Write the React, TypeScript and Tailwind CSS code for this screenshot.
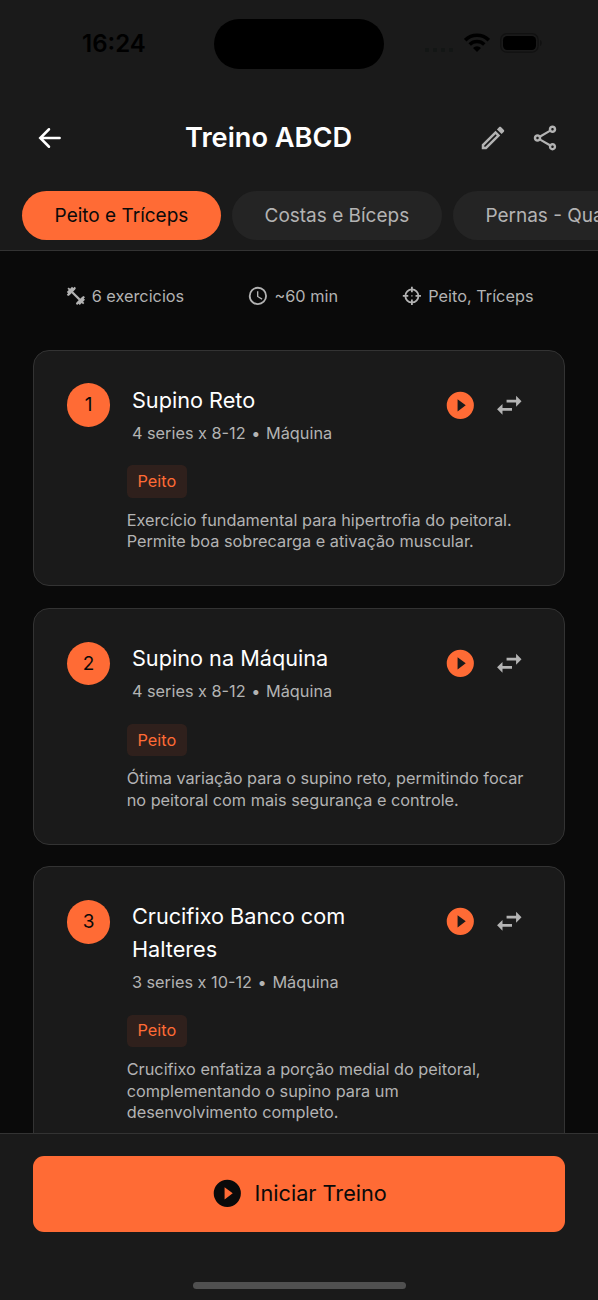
import type { ReactNode } from "react";

const tabs = ["Peito e Tríceps", "Costas e Bíceps", "Pernas - Quadríceps"];

const exercises = [
    {
        name: "Supino Reto",
        sets: "4 series x 8-12",
        equipment: "Máquina",
        muscle: "Peito",
        description: ["Exercício fundamental para hipertrofia do peitoral.", "Permite boa sobrecarga e ativação muscular."],
    },
    {
        name: "Supino na Máquina",
        sets: "4 series x 8-12",
        equipment: "Máquina",
        muscle: "Peito",
        description: ["Ótima variação para o supino reto, permitindo focar", "no peitoral com mais segurança e controle."],
    },
    {
        name: "Crucifixo Banco com Halteres",
        sets: "3 series x 10-12",
        equipment: "Máquina",
        muscle: "Peito",
        description: ["Crucifixo enfatiza a porção medial do peitoral,", "complementando o supino para um", "desenvolvimento completo."],
    },
];

const icons = {
    pencil: "M14.06 9L15 9.94 5.92 19H5v-.92L14.06 9m3.6-6c-.25 0-.51.1-.7.29l-1.83 1.83 3.75 3.75 1.83-1.83c.39-.39.39-1.04 0-1.41l-2.34-2.34c-.2-.2-.45-.29-.71-.29m-3.6 3.19L3 17.25V21h3.75L17.81 9.94l-3.75-3.75z",
    share: "M18 16.08c-.76 0-1.44.3-1.96.77L8.91 12.7c.05-.23.09-.46.09-.7s-.04-.47-.09-.7l7.05-4.11c.54.5 1.25.81 2.04.81 1.66 0 3-1.34 3-3s-1.34-3-3-3-3 1.34-3 3c0 .24.04.47.09.7L8.04 9.81C7.5 9.31 6.79 9 6 9c-1.66 0-3 1.34-3 3s1.34 3 3 3c.79 0 1.5-.31 2.04-.81l7.12 4.16c-.05.21-.08.43-.08.65 0 1.61 1.31 2.92 2.92 2.92s2.92-1.31 2.92-2.92-1.31-2.92-2.92-2.92zM18 4c.55 0 1 .45 1 1s-.45 1-1 1-1-.45-1-1 .45-1 1-1zM6 13c-.55 0-1-.45-1-1s.45-1 1-1 1 .45 1 1-.45 1-1 1zm12 7.02c-.55 0-1-.45-1-1s.45-1 1-1 1 .45 1 1-.45 1-1 1z",
    clock: "M12 20a8 8 0 0 0 8-8 8 8 0 0 0-8-8 8 8 0 0 0-8 8 8 8 0 0 0 8 8m0-18a10 10 0 0 1 10 10 10 10 0 0 1-10 10C6.47 22 2 17.5 2 12A10 10 0 0 1 12 2m.5 5v5.25l4.5 2.67-.75 1.23L11 13V7h1.5z",
    swap: "M21 9l-4-4v3h-7v2h7v3l4-4M7 11l-4 4 4 4v-3h7v-2H7v-3z",
    play: "M10 16.5v-9l6 4.5M12 2A10 10 0 0 0 2 12a10 10 0 0 0 10 10 10 10 0 0 0 10-10A10 10 0 0 0 12 2z",
};

function Icon({ name, className }: { name: keyof typeof icons; className: string }) {
    return (
        <svg viewBox="0 0 24 24" fill="currentColor" fillRule="evenodd" className={`shrink-0 ${className}`}>
            <path d={icons[name]} />
        </svg>
    );
}

function Dumbbell() {
    return (
        <svg viewBox="0 0 24 24" fill="currentColor" className="size-[21.8px] shrink-0">
            <path d="M6.800 8.600L8.600 6.800 17.200 15.400 15.400 17.200z" />
            <path d="M12 3.400L10.600 2 9.200 3.400 7.700 2 5.600 4.100 4.100 2.700 2.700 4.100 4.100 5.600 2 7.700 3.400 9.200 2 10.600 3.400 12 5 11.200 11.200 5z" />
            <path d="M12 20.600L13.400 22 14.800 20.600 16.300 22 18.400 19.900 19.900 21.300 21.300 19.900 19.900 18.400 22 16.300 20.600 14.800 22 13.400 20.600 12 19 12.800 12.800 19z" />
        </svg>
    );
}

function Crosshairs() {
    return (
        <svg viewBox="0 0 24 24" fill="none" stroke="currentColor" strokeWidth="2" className="size-[21.8px] shrink-0">
            <circle cx="12" cy="12" r="7.2" />
            <path d="M12 2v6M12 16v6M2 12h6M16 12h6" />
            <path d="M11.300 12h1.400" strokeWidth="1.400" />
        </svg>
    );
}

function StatusBar() {
    return (
        <div className="flex h-[88px] shrink-0 justify-between text-black">
            <div className="w-[214px] pt-[28px] pl-[82px] text-[24px] leading-[32px] font-semibold">16:24</div>
            <div className="mt-[19px] h-[50px] w-[170px] rounded-full bg-black" />
            <div className="flex w-[214px] items-start pl-[41px]">
                <div className="mt-[48px] flex gap-[4px]">
                    {[0, 1, 2, 3].map((dot) => (
                        <span key={dot} className="size-[4px] rounded-[1px] bg-[#131615]" />
                    ))}
                </div>
                <svg viewBox="0 0 26 19" fill="none" stroke="currentColor" className="mt-[33px] ml-[11px] h-[19px] w-[26px]">
                    <path d="M1.2 7.2a16.7 16.7 0 0 1 23.6 0" strokeWidth="3.6" />
                    <path d="M5.7 11.6a10.4 10.4 0 0 1 14.6 0" strokeWidth="3.5" />
                    <path d="M13 19l-4-4.1a5.7 5.7 0 0 1 8 0z" fill="currentColor" stroke="none" />
                </svg>
                <svg viewBox="0 0 42 20" className="mt-[33px] ml-[10px] h-[20px] w-[42px]">
                    <rect x="0.7" y="0.7" width="37.4" height="18.4" rx="6" fill="none" stroke="#111" strokeWidth="1.3" />
                    <rect x="3" y="3" width="33" height="14" rx="4.2" fill="#000" />
                    <path d="M40 7v6c2.4-1.3 2.4-4.7 0-6z" fill="#111" />
                </svg>
            </div>
        </div>
    );
}

function InfoItem({ icon, label }: { icon: ReactNode; label: string }) {
    return (
        <div className="flex items-center gap-[5.4px]">
            {icon}
            <span className="text-[16.3px] leading-[22px] whitespace-nowrap">{label}</span>
        </div>
    );
}

function ExerciseCard({ index, exercise }: { index: number; exercise: (typeof exercises)[number] }) {
    return (
        <div className="rounded-[16px] border border-[#333] bg-[#1a1a1a] pt-[32.6px] pr-[33px] pb-[32.2px] pl-[32.8px]">
            <div className="flex">
                <div className="flex size-[43.5px] shrink-0 items-center justify-center rounded-full bg-[#ff6b35] pt-px text-[19px] text-[#0a0a0a]">
                    {index}
                </div>
                <div className="ml-[21.6px] w-[260px] pt-[0.3px]">
                    <h2 className="text-[21.7px] leading-[32.6px] text-white">{exercise.name}</h2>
                    <p className="mt-[6.4px] text-[16.3px] leading-[21.8px] text-[#b3b3b3]">
                        {exercise.sets} <span className="mx-[1px]">•</span> {exercise.equipment}
                    </p>
                </div>
                <div className="ml-auto flex h-[43.5px] items-center gap-[16.3px] pr-[5.4px]">
                    <Icon name="play" className="size-[32.6px] text-[#ff6b35]" />
                    <Icon name="swap" className="size-[32.6px] text-[#b3b3b3]" />
                </div>
            </div>
            {/* Muscle tag and notes, indented under the name */}
            <div className="ml-[59.9px] pt-[20.9px] text-[16.3px] leading-[21.8px]">
                <span className="flex h-[32.6px] w-fit items-center rounded-[5.4px] bg-[#2f201c] px-[10.8px] pt-px text-[#ff6b35]">
                    {exercise.muscle}
                </span>
                <p className="mt-[11.7px] whitespace-nowrap text-[#b3b3b3]">
                    {exercise.description.map((line) => (
                        <span key={line} className="block">{line}</span>
                    ))}
                </p>
            </div>
        </div>
    );
}

export default function App() {
    return (
        <div className="flex h-[1300px] w-[598px] flex-col overflow-hidden bg-[#0a0a0a] font-['Inter',sans-serif]">
            <header className="h-[251px] shrink-0 overflow-hidden border-b border-[#333] bg-[#1a1a1a]">
                <StatusBar />
                <div className="flex h-[100px] items-center pr-[38px] pl-[34px]">
                    <svg viewBox="0 0 24 24" fill="none" stroke="currentColor" strokeWidth="2" strokeLinecap="round" className="size-[30px] text-white">
                        <path d="M20.5 12H5.5M12 5l-7 7 7 7" />
                    </svg>
                    <h1 className="ml-[121px] w-[168px] text-[27.2px] leading-[36px] font-semibold whitespace-nowrap text-white">Treino ABCD</h1>
                    <div className="ml-auto flex gap-[22px] text-[#b3b3b3]">
                        <Icon name="pencil" className="size-[30px]" />
                        <Icon name="share" className="size-[30px]" />
                    </div>
                </div>
                <div className="mt-[3px] flex gap-[11px] pl-[22px]">
                    {tabs.map((tab, i) => (
                        <div
                            key={tab}
                            className={`flex h-[48.6px] shrink-0 items-center rounded-full px-[32.6px] pt-px text-[19px] whitespace-nowrap ${i === 0 ? "bg-[#ff6b35] text-[#0a0a0a]" : "bg-[#242424] text-[#b3b3b3]"}`}
                        >
                            {tab}
                        </div>
                    ))}
                </div>
            </header>

            <main className="min-h-0 flex-1 overflow-hidden">
                <div className="flex h-[98.8px] items-center justify-between px-[64.5px] pb-[9px] text-[#b3b3b3]">
                    <InfoItem icon={<Dumbbell />} label="6 exercicios" />
                    <InfoItem icon={<Icon name="clock" className="size-[21.8px]" />} label="~60 min" />
                    <InfoItem icon={<Crosshairs />} label="Peito, Tríceps" />
                </div>
                <div className="flex flex-col gap-[21.7px] px-[33px]">
                    {exercises.map((exercise, i) => (
                        <ExerciseCard key={exercise.name} index={i + 1} exercise={exercise} />
                    ))}
                </div>
            </main>

            <footer className="h-[167.5px] shrink-0 border-t border-[#333] bg-[#1a1a1a] px-[33px] pt-[22px]">
                <button className="flex h-[76px] w-full items-center justify-center gap-[10.9px] rounded-[11px] bg-[#ff6b35] text-[21.7px] text-[#0a0a0a]">
                    <Icon name="play" className="size-[32.6px]" />
                    Iniciar Treino
                </button>
                <div className="mx-auto mt-[50px] h-[7px] w-[213px] rounded-full bg-[#505050]" />
            </footer>
        </div>
    );
}
